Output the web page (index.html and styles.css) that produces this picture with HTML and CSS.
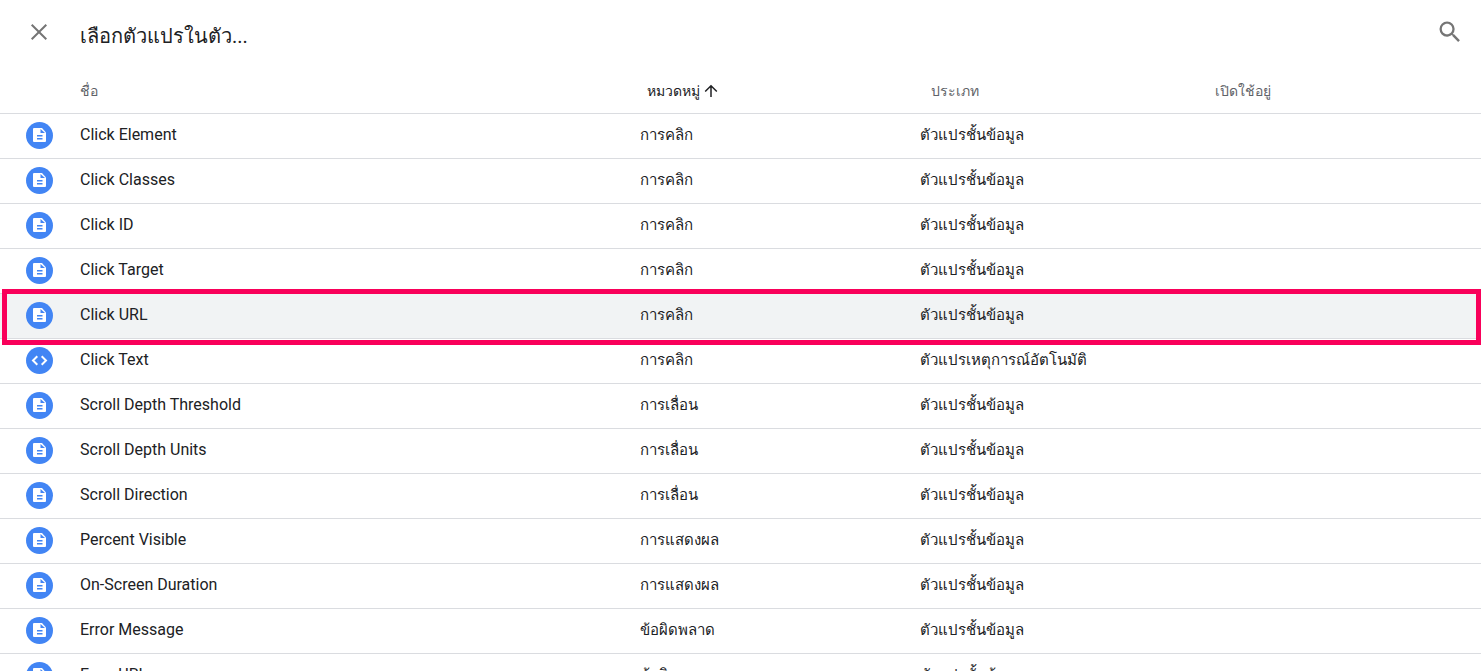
FILE: index.html
```html
<!DOCTYPE html>
<html lang="th">
<head>
    <meta charset="UTF-8">
    <meta name="viewport" content="width=device-width, initial-scale=1.0">
    <title>เลือกตัวแปรในตัว</title>
    <link rel="stylesheet" href="styles.css">
</head>
<body>
    <svg class="symbols" aria-hidden="true">
        <symbol id="doc" viewBox="0 0 27 27">
            <circle cx="13.5" cy="13.5" r="13.5" fill="#4285f4"/>
            <path fill="#fff" d="M8 6h8l4 4.500V19a1 1 0 0 1-1 1H8a1 1 0 0 1-1-1V7a1 1 0 0 1 1-1z"/>
            <path fill="#4285f4" d="M14.500 7v4H19zM11 13h5.500v1.500H11zM11 16h5.500v1.500H11z"/>
        </symbol>
        <symbol id="code" viewBox="0 0 27 27">
            <circle cx="13.5" cy="13.5" r="13.5" fill="#4285f4"/>
            <path fill="none" stroke="#fff" stroke-width="2" d="M11.300 9.200L7 13.500l4.300 4.300M15.700 9.200l4.300 4.300-4.300 4.300"/>
        </symbol>
    </svg>
    <header class="header">
        <button class="icon-btn" type="button" aria-label="ปิด">
            <svg width="24" height="24" viewBox="0 0 24 24"><path fill="none" stroke="#757575" stroke-width="2" d="M4.700 4.700l14.600 14.600M19.300 4.700L4.700 19.300"/></svg>
        </button>
        <h1>เลือกตัวแปรในตัว...</h1>
        <button class="icon-btn" type="button" aria-label="ค้นหา">
            <svg width="28" height="28" viewBox="0 0 24 24"><path fill="#757575" d="M15.500 14h-.790l-.280-.270A6.471 6.471 0 0 0 16 9.500 6.500 6.500 0 1 0 9.500 16c1.610 0 3.090-.590 4.230-1.570l.270.280v.790l5 4.990L20.490 19l-4.990-5zm-6 0C7.010 14 5 11.990 5 9.500S7.010 5 9.500 5 14 7.010 14 9.500 11.990 14 9.500 14z"/></svg>
        </button>
    </header>
    <table class="variables">
        <colgroup>
            <col class="col-icon">
            <col class="col-name">
            <col class="col-category">
            <col class="col-type">
            <col>
        </colgroup>
        <thead>
            <tr>
                <td></td>
                <th scope="col">ชื่อ</th>
                <th scope="col" class="th-category" aria-sort="ascending">
                    <button class="sort" type="button">หมวดหมู่
                        <svg width="14" height="14" viewBox="0 0 14 14"><path fill="none" stroke="#202124" stroke-width="1.500" d="M7 13V2M1.200 7.500L7 1.700l5.800 5.800"/></svg>
                    </button>
                </th>
                <th scope="col" class="th-type">ประเภท</th>
                <th scope="col" class="th-enabled">เปิดใช้อยู่</th>
            </tr>
        </thead>
        <tbody>
            <tr>
                <td class="icon"><svg><use href="#doc"/></svg></td>
                <td class="name">Click Element</td>
                <td>การคลิก</td>
                <td>ตัวแปรชั้นข้อมูล</td>
                <td></td>
            </tr>
            <tr>
                <td class="icon"><svg><use href="#doc"/></svg></td>
                <td class="name">Click Classes</td>
                <td>การคลิก</td>
                <td>ตัวแปรชั้นข้อมูล</td>
                <td></td>
            </tr>
            <tr>
                <td class="icon"><svg><use href="#doc"/></svg></td>
                <td class="name">Click ID</td>
                <td>การคลิก</td>
                <td>ตัวแปรชั้นข้อมูล</td>
                <td></td>
            </tr>
            <tr>
                <td class="icon"><svg><use href="#doc"/></svg></td>
                <td class="name">Click Target</td>
                <td>การคลิก</td>
                <td>ตัวแปรชั้นข้อมูล</td>
                <td></td>
            </tr>
            <tr class="selected">
                <td class="icon"><svg><use href="#doc"/></svg></td>
                <td class="name">Click URL</td>
                <td>การคลิก</td>
                <td>ตัวแปรชั้นข้อมูล</td>
                <td><div class="highlight"></div></td>
            </tr>
            <tr>
                <td class="icon"><svg><use href="#code"/></svg></td>
                <td class="name">Click Text</td>
                <td>การคลิก</td>
                <td>ตัวแปรเหตุการณ์อัตโนมัติ</td>
                <td></td>
            </tr>
            <tr>
                <td class="icon"><svg><use href="#doc"/></svg></td>
                <td class="name">Scroll Depth Threshold</td>
                <td>การเลื่อน</td>
                <td>ตัวแปรชั้นข้อมูล</td>
                <td></td>
            </tr>
            <tr>
                <td class="icon"><svg><use href="#doc"/></svg></td>
                <td class="name">Scroll Depth Units</td>
                <td>การเลื่อน</td>
                <td>ตัวแปรชั้นข้อมูล</td>
                <td></td>
            </tr>
            <tr>
                <td class="icon"><svg><use href="#doc"/></svg></td>
                <td class="name">Scroll Direction</td>
                <td>การเลื่อน</td>
                <td>ตัวแปรชั้นข้อมูล</td>
                <td></td>
            </tr>
            <tr>
                <td class="icon"><svg><use href="#doc"/></svg></td>
                <td class="name">Percent Visible</td>
                <td>การแสดงผล</td>
                <td>ตัวแปรชั้นข้อมูล</td>
                <td></td>
            </tr>
            <tr>
                <td class="icon"><svg><use href="#doc"/></svg></td>
                <td class="name">On-Screen Duration</td>
                <td>การแสดงผล</td>
                <td>ตัวแปรชั้นข้อมูล</td>
                <td></td>
            </tr>
            <tr>
                <td class="icon"><svg><use href="#doc"/></svg></td>
                <td class="name">Error Message</td>
                <td>ข้อผิดพลาด</td>
                <td>ตัวแปรชั้นข้อมูล</td>
                <td></td>
            </tr>
            <tr>
                <td class="icon"><svg><use href="#doc"/></svg></td>
                <td class="name">Error URL</td>
                <td>ข้อผิดพลาด</td>
                <td>ตัวแปรชั้นข้อมูล</td>
                <td></td>
            </tr>
        </tbody>
    </table>
</body>
</html>
```
FILE: styles.css
```css
body {
    margin: 0;
    padding-right: 2px;
    height: 100vh;
    box-sizing: border-box;
    overflow: hidden;
    background: #fff;
    color: #202124;
    font-family: Roboto, "Noto Sans", sans-serif;
}
.symbols {
    display: none;
}
.header {
    display: flex;
    align-items: center;
    height: 64px;
    padding: 0 17px 0 27px;
}
.header h1 {
    flex: 1;
    margin: 0 0 0 29px;
    padding-top: 8px;
    font-size: 20px;
    line-height: 32px;
    font-weight: 400;
}
button {
    background: none;
    border: none;
    padding: 0;
    color: inherit;
    font: inherit;
    cursor: pointer;
}
.icon-btn svg {
    display: block;
}
.variables {
    width: 100%;
    table-layout: fixed;
    border-collapse: separate;
    border-spacing: 0;
}
.col-icon {
    width: 80px;
}
.col-name {
    width: 37.8%;
}
.col-category,
.col-type {
    width: 18.9%;
}
td, th {
    height: 44px;
    padding: 0;
    border-bottom: 1px solid #dadce0;
    text-align: left;
    white-space: nowrap;
    line-height: 20px;
}
thead td, thead th {
    height: 50px;
    box-sizing: border-box;
}
th {
    padding-top: 4px;
    font-size: 14px;
    font-weight: 400;
    color: #5f6368;
}
.th-category {
    padding-left: 7px;
    color: #202124;
}
.th-type {
    padding-left: 11px;
}
.th-enabled {
    padding-left: 15px;
}
.sort {
    display: flex;
    align-items: center;
    gap: 4px;
}
tbody td {
    padding-bottom: 2px;
    height: 42px;
    font-size: 15px;
}
tbody .name {
    font-size: 16px;
}
tbody .icon {
    padding-left: 26px;
}
.icon svg {
    display: block;
    width: 27px;
    height: 27px;
}
.selected {
    position: relative;
}
.selected td {
    background: #f1f3f4;
}
/* frame drawn over the neighbouring rows */
.highlight {
    position: absolute;
    top: -5px;
    right: 0;
    bottom: -6px;
    left: 2px;
    border: 5px solid #f9005a;
}
```
